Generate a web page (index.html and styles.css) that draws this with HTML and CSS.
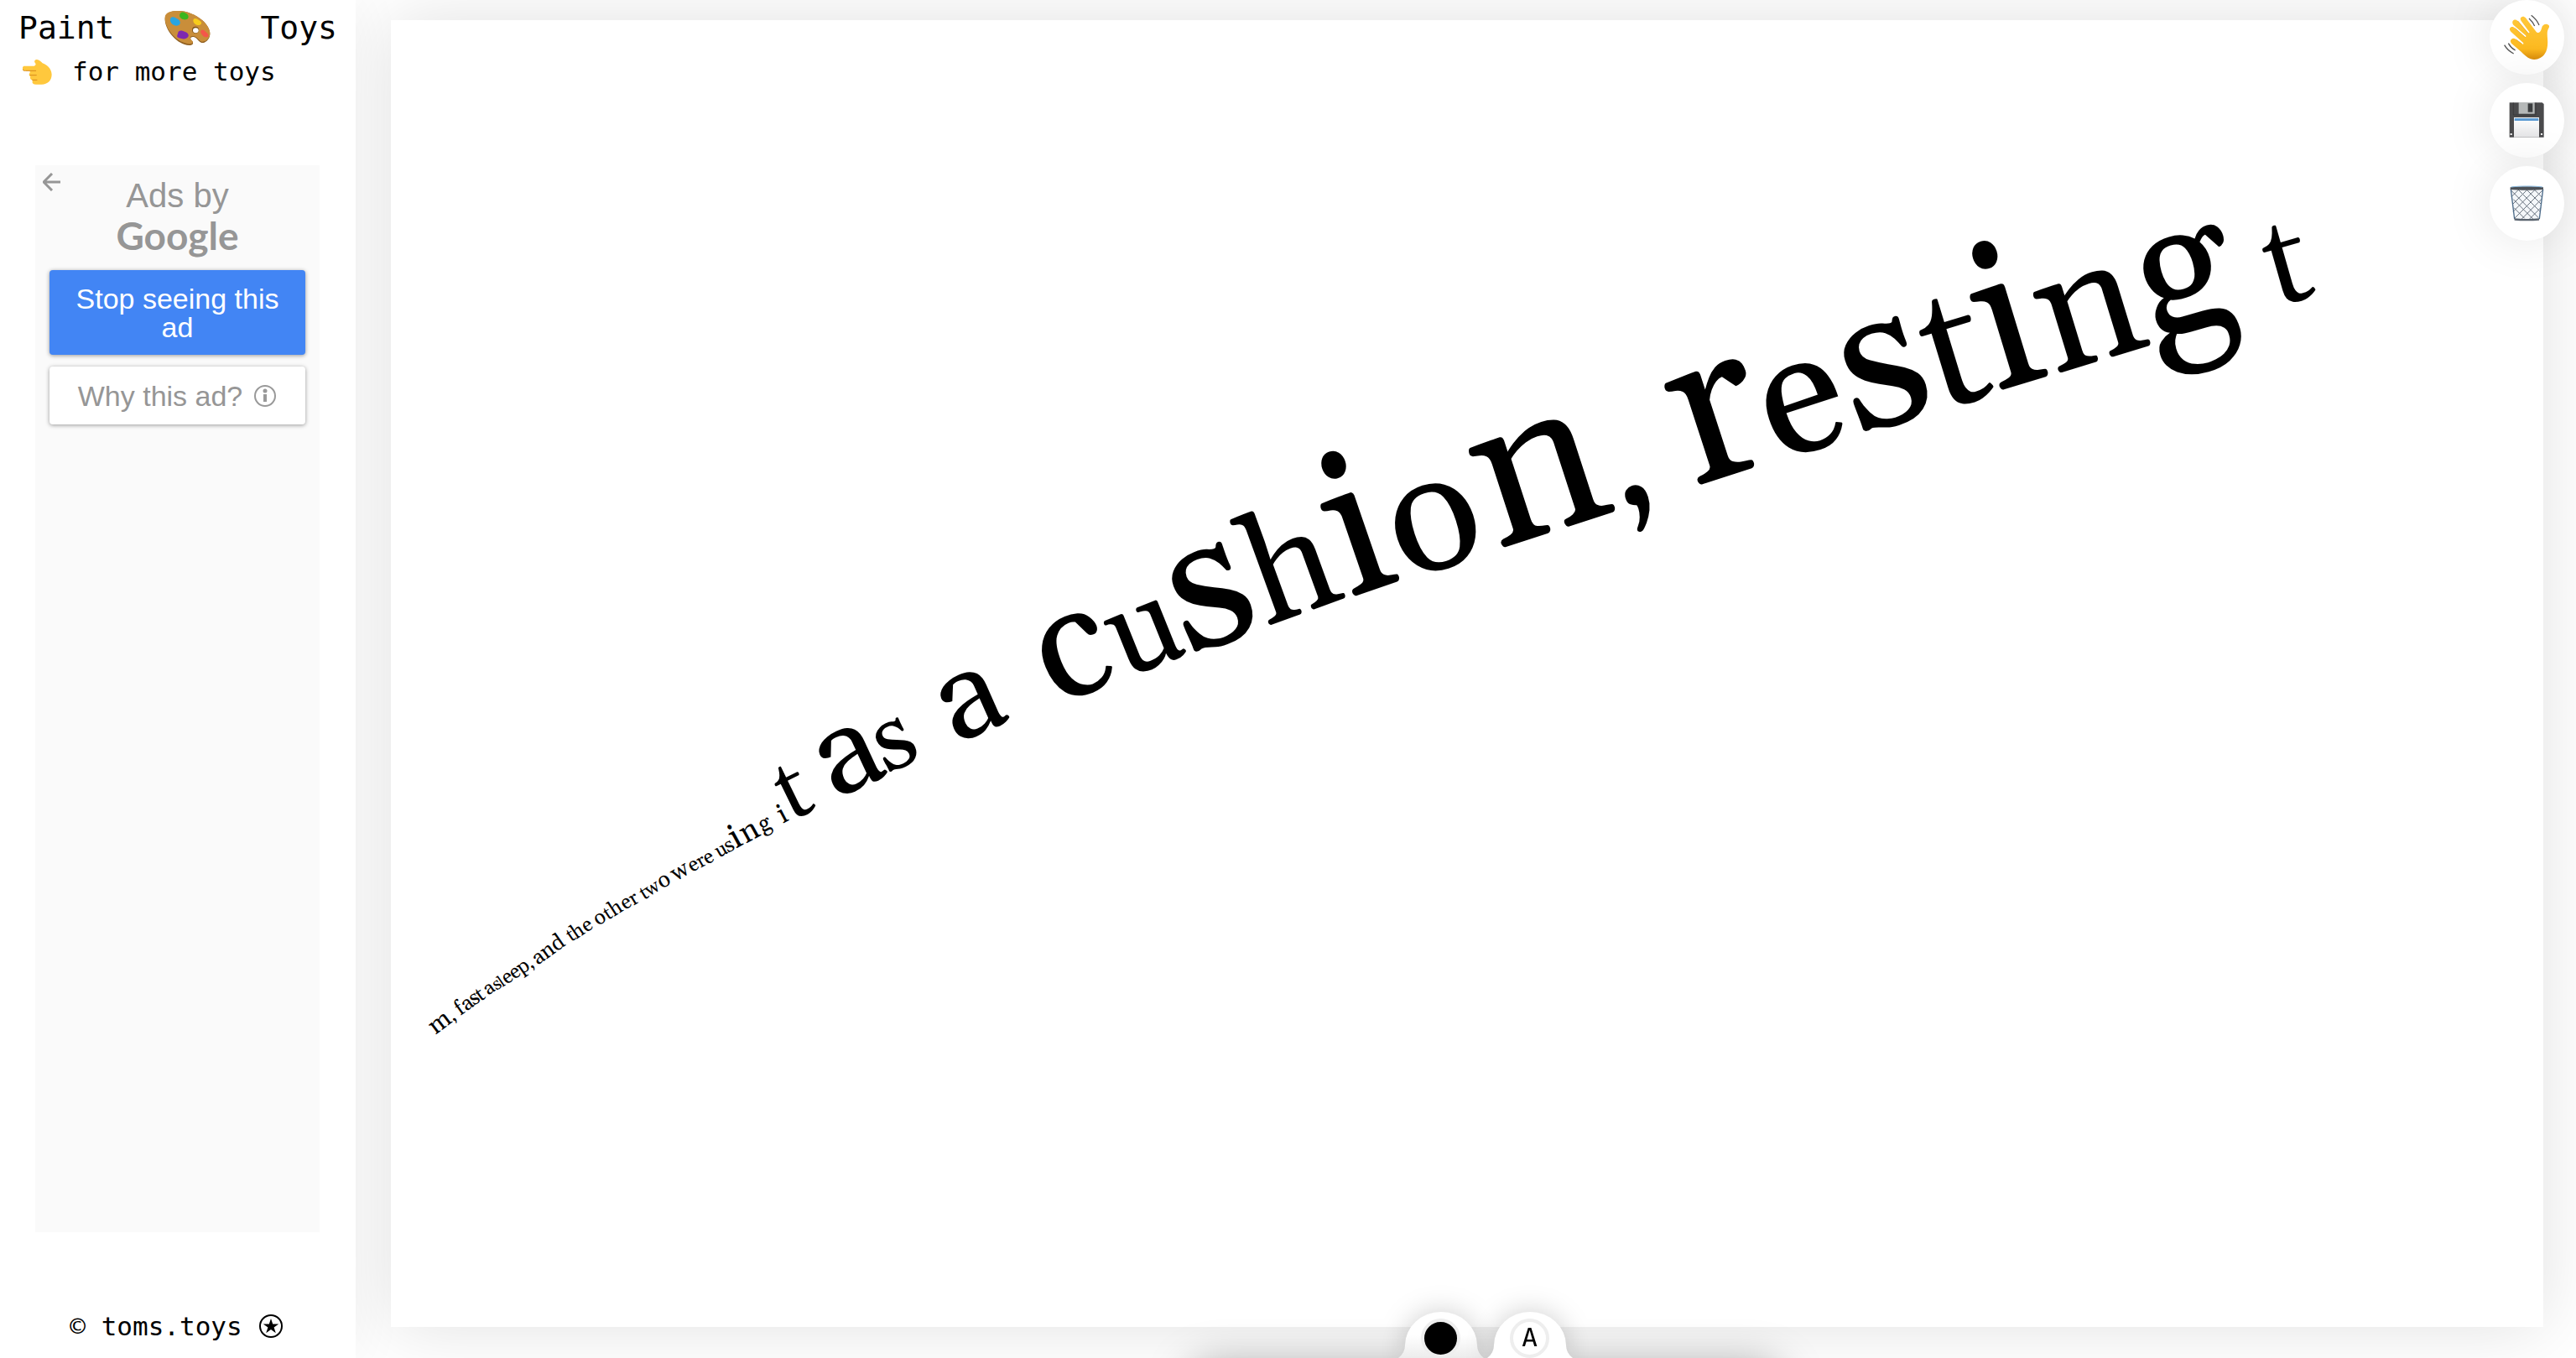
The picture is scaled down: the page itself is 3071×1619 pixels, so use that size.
FILE: index.html
```html
<!DOCTYPE html>
<html lang="en">
<head>
<meta charset="utf-8">
<title>Paint Toys</title>
<link rel="stylesheet" href="styles.css">
</head>
<body>
<aside class="sidebar">
  <header class="brand">
    <h1 class="brand-title">
      <span>Paint</span>
      <svg class="palette" viewBox="20 15 165 165" aria-hidden="true">
        <path d="M22 62C24 44 42 35 72 36c26 0 62 14 84 34 16 14 27 32 27 48 0 14-8 26-20 31-14 5-20-6-28-14-10-10-24-6-21 2 4 7 10 8 8 16-3 8-18 7-30 3C52 142 20 96 22 62z" fill="#8f5f20"/>
        <path d="M22 58C24 42 42 35 72 36c26 0 62 14 84 34 16 14 27 32 27 46 0 13-8 24-20 29-13 5-19-6-27-13-12-10-27-6-23 3 4 7 10 8 8 14-3 7-16 6-28 2C52 138 20 92 22 58z" fill="#c98e3a"/>
        <circle cx="131" cy="104" r="12" fill="#7d5216"/><ellipse cx="132" cy="106" rx="10" ry="9" fill="#fff"/>
        <path d="M42 62c6-8 16-4 22 1 8 3 14 10 12 18-3 8-14 10-21 6-8-3-18-14-13-25z" fill="#2aa5e0"/>
        <path d="M76 46c4-7 14-6 20-2 8 3 13 12 8 19-5 6-17 5-23 1-6-4-9-11-5-18z" fill="#3cb61e"/>
        <path d="M124 66c5-6 12-2 18 2 7 3 13 9 9 15-5 6-16 4-21 0-5-3-9-10-6-17z" fill="#f7cc1b"/>
        <path d="M151 106c5-6 12 0 17 5 6 5 13 12 8 17-5 4-14 1-18-3-5-4-11-12-7-19z" fill="#f4564a"/>
        <path d="M70 110c8-6 16-2 22 0 8 2 16 8 14 16-3 9-16 12-25 9-8-2-18-3-15-12z" fill="#7e28b0"/>
      </svg>
      <span>Toys</span>
    </h1>
    <a class="more-link" href="#more">
      <svg class="point" viewBox="80 195 105 105" aria-hidden="true">
        <path d="M84 227h37c6-3 8-7 3-12-4-5 0-12 7-11 8 1 14 6 20 13 14 5 32 18 33 40 0 22-15 35-36 36h-20c-14 0-15-8-12-15-7-1-11-7-8-13-5-2-7-9-2-14v-7H84c-6-3-6-14 0-17z" fill="#ffc83d"/>
        <path d="M81 240c2 5 5 4 10 4h36M107 260h22M115 277h16" fill="none" stroke="#d78a1c" stroke-width="3" stroke-linecap="round"/>
      </svg>
      <span>for more toys</span>
    </a>
  </header>

  <section class="ad" aria-label="Advertisement">
    <button class="ad-back" aria-label="Back">
      <svg viewBox="0 0 22 22" aria-hidden="true"><path d="M21 11H2M11 1L1 11l10 10" fill="none" stroke="#969696" stroke-width="3"/></svg>
    </button>
    <p class="ad-by">Ads by</p>
    <p class="ad-google">Google</p>
    <button class="ad-button ad-stop">Stop seeing this ad</button>
    <button class="ad-button ad-why">
      <span>Why this ad?</span>
      <svg class="info" viewBox="0 0 28 28" aria-hidden="true">
        <circle cx="14" cy="14" r="12" fill="none" stroke="#999" stroke-width="2"/>
        <circle cx="14" cy="8" r="2.5" fill="#999"/><path d="M12 12h4v9h-4z" fill="#999"/>
      </svg>
    </button>
  </section>

  <footer class="footer">
    <a class="footer-link" href="#home">© toms.toys</a>
    <svg class="star" viewBox="0 0 28 28" aria-hidden="true">
      <circle cx="14" cy="14" r="13" fill="none" stroke="#000" stroke-width="2"/>
      <path d="M14 5l2.200 6.500h7l-5.600 4 2.200 6.700-5.800-4.100-5.800 4.100 2.200-6.700-5.600-4h7z"/>
    </svg>
  </footer>
</aside>

<main class="stage">
  <svg class="canvas" viewBox="466 24 2566 1558" role="img" aria-label="Painted text">
    <text class="ink">
      <tspan x="519" y="1234" rotate="-37" font-size="30">m</tspan><tspan x="540" y="1218" rotate="-37" font-size="23">,</tspan>
      <tspan x="549" y="1211" rotate="-36" font-size="25">f</tspan><tspan x="556" y="1206" rotate="-36" font-size="25">a</tspan><tspan x="565" y="1199" rotate="-35" font-size="25">s</tspan><tspan x="573" y="1194" rotate="-35" font-size="24">t</tspan>
      <tspan x="582" y="1187" rotate="-35" font-size="23">a</tspan><tspan x="592" y="1181" rotate="-35" font-size="21">s</tspan><tspan x="599" y="1177" rotate="-35" font-size="19">l</tspan><tspan x="604" y="1174" rotate="-35" font-size="24">e</tspan><tspan x="613" y="1168" rotate="-35" font-size="24">e</tspan><tspan x="622" y="1162" rotate="-35" font-size="24">p</tspan><tspan x="633" y="1155" rotate="-35" font-size="22">,</tspan>
      <tspan x="641" y="1151" rotate="-36" font-size="25">a</tspan><tspan x="651" y="1144" rotate="-36" font-size="26">n</tspan><tspan x="663" y="1135" rotate="-35" font-size="26">d</tspan>
      <tspan x="681" y="1123" rotate="-34" font-size="23">t</tspan><tspan x="687" y="1120" rotate="-34" font-size="24">h</tspan><tspan x="699" y="1112" rotate="-34" font-size="24">e</tspan>
      <tspan x="713" y="1104" rotate="-33" font-size="25">o</tspan><tspan x="725" y="1097" rotate="-33" font-size="23">t</tspan><tspan x="732" y="1093" rotate="-33" font-size="25">h</tspan><tspan x="745" y="1085" rotate="-32" font-size="24">e</tspan><tspan x="755" y="1080" rotate="-32" font-size="24">r</tspan>
      <tspan x="768" y="1073" rotate="-32" font-size="23">t</tspan><tspan x="774" y="1069" rotate="-32" font-size="23">w</tspan><tspan x="789" y="1060" rotate="-31" font-size="27">o</tspan>
      <tspan x="806" y="1051" rotate="-31" font-size="28">w</tspan><tspan x="825" y="1040" rotate="-30" font-size="24">e</tspan><tspan x="835" y="1035" rotate="-30" font-size="23">r</tspan><tspan x="843" y="1031" rotate="-30" font-size="24">e</tspan>
      <tspan x="857" y="1023" rotate="-30" font-size="24">u</tspan><tspan x="868" y="1017" rotate="-30" font-size="25">s</tspan><tspan x="877" y="1012" rotate="-29" font-size="41">i</tspan><tspan x="889" y="1006" rotate="-29" font-size="37">n</tspan><tspan x="909" y="993" rotate="-28" font-size="28">g</tspan>
      <tspan x="933" y="982" rotate="-28" font-size="33">i</tspan><tspan x="943" y="979" rotate="-26" font-size="102">t</tspan>
      <tspan x="994" y="954" rotate="-25" font-size="148">a</tspan><tspan x="1057" y="923" rotate="-25" font-size="112">s</tspan>
      <tspan x="1138" y="888" rotate="-24" font-size="150">a</tspan>
      <tspan x="1258" y="841" rotate="-22" font-size="190">c</tspan><tspan x="1339" y="810" rotate="-22" font-size="152">u</tspan><tspan x="1416" y="782" rotate="-20" font-size="230">s</tspan><tspan x="1510" y="747" rotate="-20" font-size="178">h</tspan><tspan x="1606" y="714" rotate="-19" font-size="244">i</tspan><tspan x="1674" y="692" rotate="-18" font-size="204">o</tspan><tspan x="1783" y="656" rotate="-18" font-size="260">n</tspan><tspan x="1931" y="608" rotate="-18" font-size="184">,</tspan>
      <tspan x="2015" y="582" rotate="-18" font-size="266">r</tspan><tspan x="2118" y="550" rotate="-18" font-size="208">e</tspan><tspan x="2213" y="519" rotate="-17" font-size="244">s</tspan><tspan x="2313" y="489" rotate="-17" font-size="204">t</tspan><tspan x="2377" y="468" rotate="-17" font-size="250">i</tspan><tspan x="2448" y="447" rotate="-17" font-size="210">n</tspan><tspan x="2564" y="407" rotate="-16" font-size="230">g</tspan>
      <tspan x="2714" y="365" rotate="-16" font-size="148">t</tspan>
    </text>
  </svg>
</main>

<nav class="actions" aria-label="Actions">
  <button class="action" aria-label="Say hello">
    <svg viewBox="45 50 165 165" aria-hidden="true">
      <defs><linearGradient id="skin" x1="0" y1="0" x2="0" y2="1"><stop offset="0" stop-color="#ffc83a"/><stop offset=".75" stop-color="#fcb920"/><stop offset="1" stop-color="#d88c0c"/></linearGradient></defs>
      <path d="M180 100c2-12 12-16 20-14 8 2 9 8 5 14-6 10-5 22-4 36 2 22 0 42-10 56-10 15-30 24-50 18-14-5-24-17-34-26L72 154c-6-7-3-15 4-17 4-2 8 0 12 3l22 16c4 3 7 0 4-4L70 112c-7-7-4-14 1-16 5-2 10 0 14 4l34 30c4 3 7-1 4-4L79 88c-6-8-3-15 2-18 5-2 10 0 14 4l36 42c4 3 7 0 4-4l-28-38c-5-7-3-12 3-15 5-2 9 0 13 4l38 50c6 7 16 1 19-13z" fill="url(#skin)"/>
      <path d="M88 140l22 16M85 100l36 32M95 74l38 45" fill="none" stroke="#e09a13" stroke-width="2"/>
      <path d="M135 65c8 7 15 16 20 27M143 54c12 9 22 20 28 35M47 160c7 13 18 23 33 31M61 154c6 11 14 19 25 25" fill="none" stroke="#555" stroke-width="4"/>
    </svg>
  </button>
  <button class="action" aria-label="Save">
    <svg viewBox="46 351 165 165" aria-hidden="true">
      <defs><linearGradient id="label" x1="0" y1="0" x2="0" y2="1"><stop offset="0" stop-color="#fff"/><stop offset="1" stop-color="#e4e4e6"/></linearGradient></defs>
      <path d="M66 370h117l6 5v119H66z" fill="#4a4a4c"/>
      <path d="M80 370v44h80v-44" fill="none" stroke="#333" stroke-width="2"/>
      <path d="M99 369h57v41H99z" fill="#b5b8b8"/><path d="M132 373h17v31h-17z" fill="#3c3e40"/>
      <path d="M82 423h90v71H82z" fill="url(#label)"/><path d="M84 426h86v9H84z" fill="#5d9bd3"/>
      <path d="M69 480h6v6h-6zM178 480h6v6h-6z" fill="#fff"/>
    </svg>
  </button>
  <button class="action" aria-label="Clear">
    <svg viewBox="46 648 165 165" aria-hidden="true">
      <path d="M71 678h115l-13 108H84z" fill="#f4f7fa"/>
      <path d="M74 706l26-26M77 734l54-54M79 760l80-80M84 784l101-101M110 786l71-71M138 786l40-40M72 684l98 98M80 716l70 70M82 746l38 38M96 680l80 80M126 680l54 54M154 680l28 28" fill="none" stroke="#68727e" stroke-width="3"/>
      <path d="M71 680l13 106M186 680l-13 106" stroke="#4b6a88" stroke-width="4"/>
      <path d="M69 673c30-4 90-4 118 0v8c-30 3-88 3-118 0z" fill="#4d5258"/><path d="M72 672c30-4 84-4 112 0" stroke="#84b5dc" stroke-width="3" fill="none"/>
      <path d="M83 784c26 3 64 3 90 0l-1 7c-25 2-62 2-88 0z" fill="#59636e"/>
    </svg>
  </button>
</nav>

<div class="tray">
  <button class="tab" aria-label="Colour">
    <svg class="tab-shape" viewBox="0 0 102 55" aria-hidden="true">
      <defs><linearGradient id="fade" x1="0" y1="0" x2="0" y2="1"><stop offset=".5" stop-color="#fff"/><stop offset="1" stop-color="#ececec"/></linearGradient></defs>
      <path d="M0 55Q8 49 8 40A43 40 0 0 1 94 40Q94 49 102 55z" fill="url(#fade)"/>
    </svg>
    <span class="ring ring-black"></span>
  </button>
  <button class="tab" aria-label="Brush">
    <svg class="tab-shape" viewBox="0 0 102 55" aria-hidden="true">
      <path d="M0 55Q8 49 8 40A43 40 0 0 1 94 40Q94 49 102 55z" fill="#fff"/>
    </svg>
    <span class="ring">A</span>
  </button>
</div>
</body>
</html>
```
FILE: styles.css
```css
* {
  box-sizing: border-box;
}

body {
  margin: 0;
  height: 100vh;
  display: grid;
  grid-template-columns: 424px 1fr;
  overflow: hidden;
  background: #fff;
  color: #000;
  font-family: "DejaVu Sans Mono", Consolas, monospace;
  font-size: 31px;
}

button {
  margin: 0;
  padding: 0;
  border: 0;
  background: none;
  color: inherit;
  font: inherit;
  cursor: pointer;
}

a {
  color: inherit;
  text-decoration: none;
}

svg {
  display: block;
}

.sidebar {
  display: flex;
  flex-direction: column;
  background: #fff;
  box-shadow: 0 0 60px rgba(0, 0, 0, .06);
}

.brand {
  height: 197px;
  padding: 5px 22px 0;
}

.brand-title {
  display: flex;
  justify-content: space-between;
  align-items: center;
  margin: 0;
  font-size: 38px;
  font-weight: 400;
  line-height: 56px;
}

.palette {
  width: 55px;
  height: 55px;
}

.more-link {
  display: flex;
  align-items: center;
  gap: 24px;
  padding-left: 5px;
  line-height: 48px;
}

.point {
  width: 35px;
  height: 35px;
}

.ad {
  position: relative;
  flex: 1;
  display: flex;
  flex-direction: column;
  margin: 0 43px 0 42px;
  padding: 12px 17px;
  background: #fafafa;
  color: #969696;
  font-family: "Liberation Sans", Arial, sans-serif;
  text-align: center;
}

.ad-back {
  position: absolute;
  left: 9px;
  top: 9px;
  width: 22px;
  height: 22px;
}

.ad-by,
.ad-google {
  margin: 0;
  font-size: 40px;
  line-height: 48px;
}

.ad-google {
  margin-bottom: 17px;
  font-family: Lato, sans-serif;
  font-size: 46px;
  font-weight: 700;
}

.ad-button {
  border-radius: 4px;
  box-shadow: 0 1px 5px rgba(0, 0, 0, .4);
  font-size: 34px;
  line-height: 34px;
}

.ad-stop {
  height: 101px;
  margin-bottom: 14px;
  padding: 0 24px;
  background: #4285f4;
  color: #fff;
}

.ad-why {
  display: flex;
  justify-content: center;
  align-items: center;
  gap: 13px;
  height: 69px;
  background: #fff;
}

.info {
  width: 28px;
  height: 28px;
}

.footer {
  display: flex;
  justify-content: center;
  align-items: center;
  gap: 20px;
  height: 150px;
  padding: 74px 4px 0 0;
}

.star {
  width: 28px;
  height: 28px;
}

.stage {
  position: relative;
  display: flex;
  padding: 24px 39px 37px 42px;
  overflow: hidden;
}

.canvas {
  flex: 1;
  min-width: 0;
  background: #fff;
  box-shadow: 0 0 80px rgba(0, 0, 0, .12);
}

.ink {
  font-family: Georgia, Gelasio, "Liberation Serif", serif;
}

.actions {
  position: fixed;
  z-index: 2;
  top: 0;
  right: 14px;
  display: grid;
  gap: 10px;
}

.action {
  display: grid;
  place-items: center;
  width: 89px;
  height: 89px;
  border-radius: 50%;
  background: #fff;
  box-shadow: 0 0 60px rgba(0, 0, 0, .1);
}

.action svg {
  width: 55px;
  height: 55px;
}

.tray {
  position: fixed;
  z-index: 2;
  left: 50%;
  bottom: 0;
  display: flex;
  gap: 4px;
  margin-left: 131px;
}

.tray::before {
  content: "";
  position: absolute;
  top: 100%;
  left: -250px;
  right: -250px;
  height: 60px;
  border-radius: 60px;
  box-shadow: 0 8px 50px rgba(0, 0, 0, .35);
}

.tab {
  position: relative;
  display: flex;
  justify-content: center;
  width: 102px;
  height: 55px;
  padding-top: 8px;
}

.tab-shape {
  position: absolute;
  inset: 0;
  filter: drop-shadow(0 0 16px rgba(0, 0, 0, .2));
  overflow: visible;
}

.ring {
  position: relative;
  width: 47px;
  height: 47px;
  border: 4px solid #eee;
  border-radius: 50%;
  line-height: 37px;
}

.ring-black {
  background: #000;
}
```
